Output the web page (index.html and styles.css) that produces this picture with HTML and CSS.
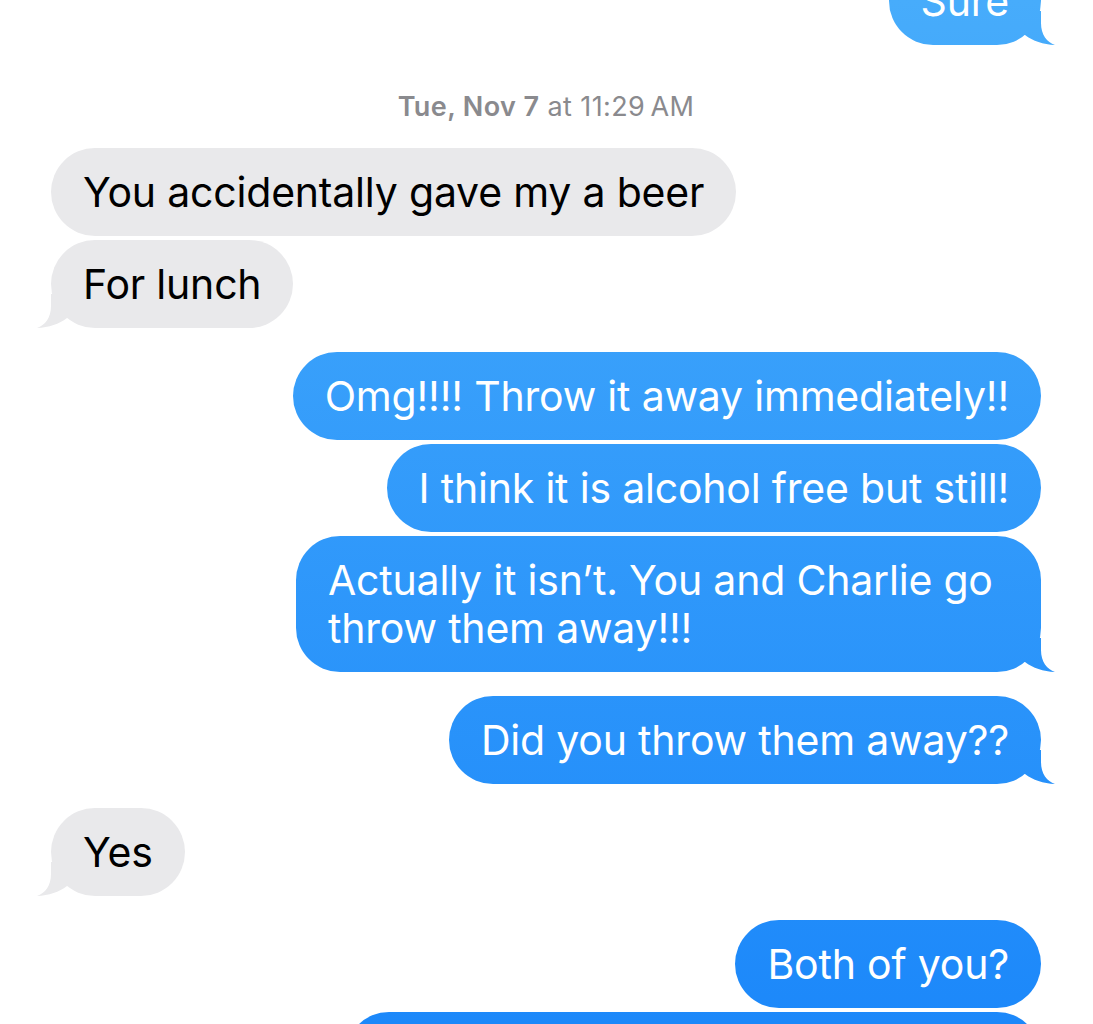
FILE: index.html
```html
<!DOCTYPE html>
<html lang="en">
<head>
<meta charset="utf-8">
<title>Messages</title>
<link rel="stylesheet" href="styles.css">
</head>
<body>
<main class="thread">
  <div class="group sent">
    <div class="bubble blue tail">Sure</div>
  </div>

  <div class="stamp"><span class="day">Tue, Nov 7</span> at 11:29&#8201;AM</div>

  <div class="group recv">
    <div class="bubble grey">You accidentally gave my a beer</div>
    <div class="bubble grey tail">For lunch</div>
  </div>

  <div class="group sent">
    <div class="bubble blue">Omg!!!! Throw it away immediately!!</div>
    <div class="bubble blue">I think it is alcohol free but still!</div>
    <div class="bubble blue tail wrap">Actually it isn’t. You and Charlie go throw them away!!!</div>
  </div>

  <div class="group sent">
    <div class="bubble blue tail">Did you throw them away??</div>
  </div>

  <div class="group recv">
    <div class="bubble grey tail">Yes</div>
  </div>

  <div class="group sent">
    <div class="bubble blue">Both of you?</div>
    <div class="bubble blue cut"></div>
  </div>
</main>
</body>
</html>
```

FILE: styles.css
```css
html, body {
  margin: 0;
  padding: 0;
  background: #ffffff;
  overflow: hidden;
}

body {
  font-family: Inter, "Noto Sans", "Liberation Sans", sans-serif;
  -webkit-font-smoothing: antialiased;
}

.thread {
  display: flex;
  flex-direction: column;
  gap: 24px;
  padding: 0 52px 0 51px;
  margin-top: -43px;
}

.group {
  display: flex;
  flex-direction: column;
  gap: 4px;
}

.group.sent { align-items: flex-end; }
.group.recv { align-items: flex-start; }

.bubble {
  position: relative;
  z-index: 0;
  font-size: 41px;
  line-height: 48px;
  letter-spacing: -0.2px;
  padding: 20px 32px;
  border-radius: 44px;
  box-sizing: border-box;
}

.bubble.blue {
  color: #ffffff;
  background: linear-gradient(to bottom, #47acfb 0px, #1c88fa 1024px);
  background-attachment: fixed;
}

.bubble.grey {
  color: #000000;
  background: #e9e9eb;
}

.bubble.wrap {
  max-width: 745px;
}

.bubble.cut {
  width: 696px;
  height: 88px;
}

/* tails */
.bubble.tail::before {
  content: "";
  position: absolute;
  z-index: -1;
  bottom: 0;
  width: 40px;
  height: 34px;
}

.blue.tail::before {
  right: -14px;
  background: linear-gradient(to bottom, #47acfb 0px, #1c88fa 1024px);
  background-attachment: fixed;
  clip-path: path("M10,24 C18,30 28,33.5 40,34 C32,31 26,24 26,12 L26,0 L0,0 L0,24 Z");
}

.grey.tail::before {
  left: -14px;
  background: #e9e9eb;
  clip-path: path("M30,24 C22,30 12,33.5 0,34 C8,31 14,24 14,12 L14,0 L40,0 L40,24 Z");
}

.stamp {
  align-self: center;
  margin: 23px 0 2px;
  font-size: 27px;
  line-height: 30px;
  color: #8a8a8e;
  letter-spacing: 0.4px;
}

.stamp .day {
  font-weight: 600;
}
```
